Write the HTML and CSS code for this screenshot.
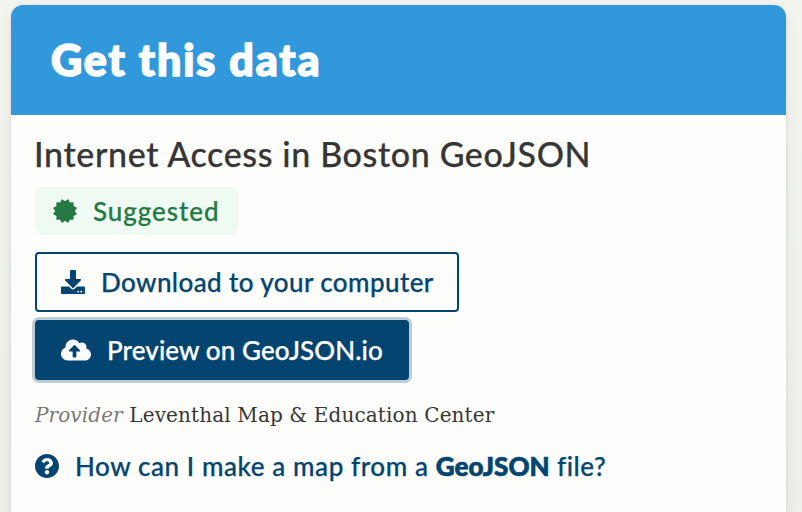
FILE: index.html
```
<!DOCTYPE html>
<html lang="en">
<head>
<meta charset="utf-8">
<title>Get this data</title>
<link rel="stylesheet" href="styles.css">
</head>
<body>
<main class="card">
  <header class="card-header"><h1>Get this data</h1></header>
  <div class="card-body">
    <h2 class="title">Internet Access in Boston GeoJSON</h2>
    <span class="tag">
      <svg class="icon-tag" viewBox="-12 -12 24 24"><path fill="currentColor" stroke="currentColor" stroke-width="1.400" stroke-linejoin="round" d="M0-9 2.900-11 4.500-7.800 8-8 7.800-4.500 11-2.900 9 0 11 2.900 7.800 4.500 8 8 4.500 7.800 2.900 11 0 9-2.900 11-4.500 7.800-8 8-7.800 4.500-11 2.900-9 0-11-2.900-7.800-4.500-8-8-4.500-7.800-2.900-11Z"/></svg>
      <span class="tag-label">Suggested</span>
    </span>
    <div class="actions">
      <a class="button">
        <svg class="icon-download" viewBox="0 0 512 512"><path fill="currentColor" d="M216 0h80c13.300 0 24 10.700 24 24v168h87.700c17.800 0 26.700 21.500 14.100 34.100L269.700 378.300c-7.500 7.500-19.800 7.500-27.300 0L90.100 226.100c-12.600-12.600-3.700-34.100 14.100-34.100H192V24c0-13.300 10.700-24 24-24zm296 376v112c0 13.300-10.700 24-24 24H24c-13.300 0-24-10.700-24-24V376c0-13.300 10.700-24 24-24h146.700l49 49c20.100 20.100 52.500 20.100 72.600 0l49-49H488c13.300 0 24 10.700 24 24zm-124 88c0-11-9-20-20-20s-20 9-20 20 9 20 20 20 20-9 20-20zm64 0c0-11-9-20-20-20s-20 9-20 20 9 20 20 20 20-9 20-20z"/></svg>
        <span class="download-label">Download to your computer</span>
      </a>
      <a class="button button-active">
        <svg class="icon-cloud" viewBox="0 0 640 512"><path fill="currentColor" d="M537.600 226.600c4.100-10.700 6.400-22.400 6.400-34.600 0-53-43-96-96-96-19.700 0-38.100 6-53.300 16.200C367 64.200 315.300 32 256 32c-88.400 0-160 71.600-160 160 0 2.700.1 5.400.2 8.100C40.200 219.800 0 273.200 0 336c0 79.500 64.500 144 144 144h368c70.700 0 128-57.300 128-128 0-61.900-44-113.600-102.400-125.400zM393.400 288H328v112c0 8.800-7.200 16-16 16h-48c-8.800 0-16-7.200-16-16V288h-65.400c-14.300 0-21.400-17.200-11.300-27.400l105.400-105.400c6.200-6.200 16.400-6.200 22.600 0l105.400 105.400c10.100 10.100 2.900 27.400-11.300 27.400z"/></svg>
        <span class="preview-label">Preview on GeoJSON.io</span>
      </a>
    </div>
    <p class="provider"><em>Provider</em> Leventhal Map &amp; Education Center</p>
    <a class="help">
      <svg class="icon-help" viewBox="8 8 496 496"><path fill="currentColor" d="M504 256c0 136.997-111.043 248-248 248S8 392.997 8 256C8 119.083 119.043 8 256 8s248 111.083 248 248zM262.655 90c-54.497 0-89.255 22.957-116.549 63.758-3.536 5.286-2.353 12.415 2.715 16.258l34.699 26.310c5.205 3.947 12.621 3.008 16.665-2.122 17.864-22.658 30.113-35.797 57.303-35.797 20.429 0 45.698 13.148 45.698 32.958 0 14.976-12.363 22.667-32.534 33.976C247.128 238.528 216 254.941 216 296v4c0 6.627 5.373 12 12 12h56c6.627 0 12-5.373 12-12v-1.333c0-28.462 83.186-29.647 83.186-106.667 0-58.002-60.165-102-116.531-102zM256 338c-25.365 0-46 20.635-46 46 0 25.364 20.635 46 46 46s46-20.636 46-46c0-25.365-20.635-46-46-46z"/></svg>
      <span class="help-label">How can I make a map from a <strong>GeoJSON</strong> file?</span>
    </a>
  </div>
</main>
</body>
</html>
```
FILE: styles.css
```
* { box-sizing: border-box; }
body {
  margin: 0;
  padding: 5px 16px 0 11px;
  height: 512px;
  background: linear-gradient(#f2f4ed, #edf0e9);
  font-family: Lato, sans-serif;
  color: #363636;
}
h1, h2, p { margin: 0; }
svg { display: block; flex: none; }
.card {
  height: 507px;
  border-radius: 12px 12px 0 0;
  overflow: hidden;
  background: #fdfdfb;
  box-shadow: 0 8px 16px rgba(10, 10, 10, .06), 0 0 0 2px rgba(10, 10, 10, .025);
}
.card-header {
  display: flex;
  align-items: center;
  height: 110px;
  padding: 0 40px;
  background: #3298dc;
  color: #fff;
}
h1 { font-size: 43px; line-height: 52px; font-weight: 900; letter-spacing: 1.9px; -webkit-text-stroke: 1.6px currentColor; }
.card-body {
  display: flex;
  flex-direction: column;
  align-items: flex-start;
  padding: 18px 24px 0;
}
.title { font-size: 34px; line-height: 42px; font-weight: 500; letter-spacing: .63px; margin-left: -1px; white-space: nowrap; -webkit-text-stroke: .25px currentColor; }
.tag {
  display: flex;
  align-items: center;
  gap: 16px;
  width: 203px;
  height: 48px;
  margin-top: 12px;
  padding-left: 18px;
  border-radius: 8px;
  background: #effaf3;
  color: #257942;
}
.icon-tag { width: 24px; height: 24px; }
.tag-label, .button, .help { font-size: 26px; line-height: 32px; font-weight: 500; white-space: nowrap; -webkit-text-stroke: .25px currentColor; }
.tag-label { letter-spacing: .95px; }
.actions { display: flex; flex-direction: column; align-items: flex-start; gap: 8px; margin-top: 17px; }
.button {
  display: flex;
  align-items: center;
  gap: 16px;
  width: 424px;
  height: 60px;
  padding-left: 24px;
  border: 2px solid #034570;
  border-radius: 4px;
  color: #034570;
}
.button-active {
  width: 374px;
  background: #034570;
  color: #fff;
  box-shadow: 0 0 0 3px rgba(3, 69, 112, .25);
}
.icon-download { width: 24px; height: 24px; }
.icon-cloud { width: 30px; height: 24px; }
.download-label { letter-spacing: .4px; }
.preview-label { letter-spacing: .1px; }
.provider { margin-top: 19px; font-family: "DejaVu Serif", serif; font-size: 20px; line-height: 32px; letter-spacing: .13px; white-space: nowrap; }
.provider em { color: #7a7a7a; letter-spacing: .1px; }
.help { display: flex; align-items: center; gap: 16px; margin-top: 19px; color: #034570; }
.icon-help { width: 24px; height: 24px; }
.help-label { letter-spacing: .58px; }
.help strong { font-weight: 900; letter-spacing: .05px; -webkit-text-stroke: .7px currentColor; }
```
